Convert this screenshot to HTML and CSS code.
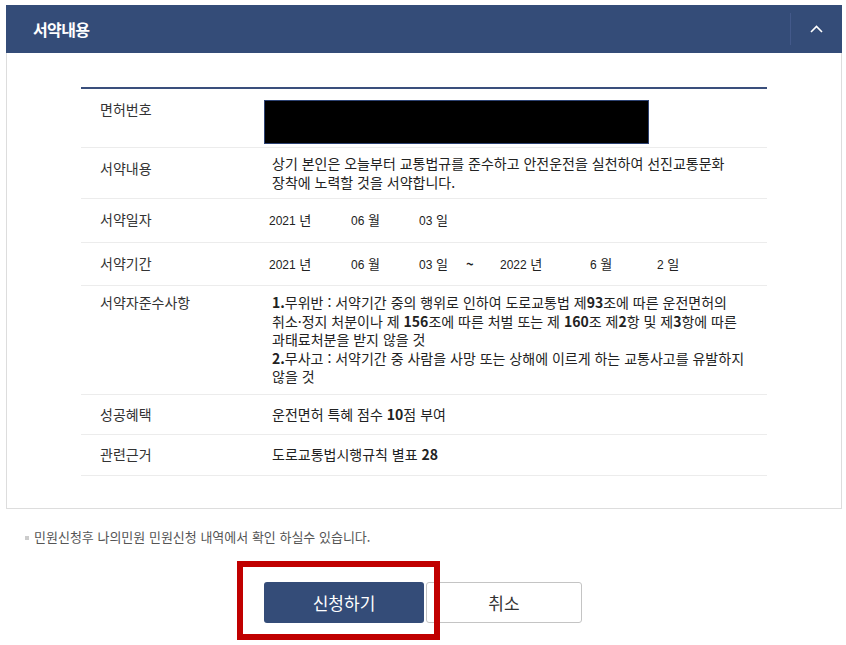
FILE: index.html
```html
<!DOCTYPE html>
<html lang="ko">
<head>
    <meta charset="UTF-8">
    <title>서약내용</title>
    <link rel="stylesheet" href="styles.css">
</head>
<body>

<!-- Pledge panel -->
<div class="panel">
    <div class="panel-head">
        <h2 class="panel-title">서약내용</h2>
        <div class="panel-toggle">
            <svg width="13" height="8" viewBox="0 0 13 8"><polyline points="1,7 6.5,1.5 12,7" fill="none" stroke="#fff" stroke-width="1.6"/></svg>
        </div>
    </div>
    <div class="panel-body">
        <table class="pledge">
            <tr class="row-license">
                <th>면허번호</th>
                <td><div class="masked"></div></td>
            </tr>
            <tr class="row-text">
                <th>서약내용</th>
                <td>상기 본인은 오늘부터 교통법규를 준수하고 안전운전을 실천하여 선진교통문화<br>장착에 노력할 것을 서약합니다.</td>
            </tr>
            <tr class="row-date">
                <th>서약일자</th>
                <td>
                    <span class="dp start-year"><em>2021</em> 년</span><span class="dp start-month"><em>06</em> 월</span><span class="dp start-day"><em>03</em> 일</span>
                </td>
            </tr>
            <tr class="row-date">
                <th>서약기간</th>
                <td>
                    <span class="dp start-year"><em>2021</em> 년</span><span class="dp start-month"><em>06</em> 월</span><span class="dp start-day"><em>03</em> 일</span><span class="dp tilde">~</span><span class="dp end-year"><em>2022</em> 년</span><span class="dp end-month"><em>6</em> 월</span><span class="dp"><em>2</em> 일</span>
                </td>
            </tr>
            <tr class="row-rules">
                <th>서약자준수사항</th>
                <td><b>1.</b>무위반 : 서약기간 중의 행위로 인하여 도로교통법 제<b>93</b>조에 따른 운전면허의<br>취소·정지 처분이나 제 <b>156</b>조에 따른 처벌 또는 제 <b>160</b>조 제<b>2</b>항 및 제<b>3</b>항에 따른<br>과태료처분을 받지 않을 것<br><b>2.</b>무사고 : 서약기간 중 사람을 사망 또는 상해에 이르게 하는 교통사고를 유발하지<br>않을 것</td>
            </tr>
            <tr>
                <th>성공혜택</th>
                <td>운전면허 특혜 점수 <b>10</b>점 부여</td>
            </tr>
            <tr>
                <th>관련근거</th>
                <td>도로교통법시행규칙 별표 <b>28</b></td>
            </tr>
        </table>
    </div>
</div>

<p class="note">민원신청후 나의민원 민원신청 내역에서 확인 하실수 있습니다.</p>

<div class="actions">
    <div class="btn-wrap">
        <button class="btn btn-primary">신청하기</button>
        <span class="highlight"></span>
    </div>
    <button class="btn btn-cancel">취소</button>
</div>

</body>
</html>
```

FILE: styles.css
```css
body {
    margin: 0;
    padding-bottom: 30px;
    font-family: "Noto Sans CJK KR", "Noto Sans", sans-serif;
    color: #333;
    background-color: #fff;
}

/* Panel */
.panel {
    margin: 5px 4px 0 6px;
}

.panel-head {
    height: 48px;
    background-color: #344c78;
    display: flex;
    justify-content: space-between;
    align-items: center;
}

.panel-title {
    margin: 0;
    padding-left: 27px;
    font-size: 16px;
    font-weight: bold;
    color: #fff;
    letter-spacing: -0.6px;
}

.panel-toggle {
    width: 51px;
    height: 32px;
    border-left: 1px solid #43598a;
    display: flex;
    justify-content: center;
    align-items: center;
}

.panel-body {
    border: 1px solid #ddd;
    border-top: none;
    padding: 34px 74px 32px;
}

/* Pledge table */
.pledge {
    width: 100%;
    border-collapse: collapse;
    border-top: 2px solid #3a4f7c;
    font-size: 14px;
    line-height: 18.5px;
}

.pledge tr {
    border-bottom: 1px solid #ececec;
}

.pledge th {
    width: 172px;
    padding: 10px 0 11px 19px;
    text-align: left;
    font-weight: normal;
    vertical-align: top;
    color: #333;
}

.pledge td {
    padding: 10px 0 11px;
    vertical-align: top;
    color: #222;
}

.pledge b {
    font-weight: bold;
}

.row-license th {
    padding-top: 11px;
}

.row-license td {
    padding: 11px 0 3px;
}

.masked {
    width: 383px;
    height: 42px;
    margin-left: -8px;
    background-color: #000;
    border: 1px solid #2d4272;
}

.row-text th {
    padding-top: 11px;
}

.row-text td {
    padding: 6px 0 7px;
}

.row-date th,
.row-date td {
    padding: 11px 0 11px;
}

.row-date th {
    padding-left: 19px;
}

.row-rules th,
.row-rules td {
    padding: 7px 0 8px;
}

.row-rules th {
    padding-left: 19px;
}

/* Date parts */
.dp {
    display: inline-block;
    font-size: 13px;
}

.dp em {
    font-style: normal;
    font-family: "Liberation Sans", Arial, sans-serif;
    font-size: 12px;
}

.start-year { width: 82px; margin-left: -3px; }
.start-month { width: 68px; }
.start-day { width: 47px; }
.tilde { width: 34px; font-weight: bold; }
.end-year { width: 90px; }
.end-month { width: 67px; }

/* Note under the panel */
.note {
    margin: 19px 0 0 25px;
    padding-left: 9px;
    position: relative;
    font-size: 13px;
    line-height: 18px;
    color: #555;
}

.note::before {
    content: "";
    position: absolute;
    left: 0;
    top: 8px;
    width: 4px;
    height: 4px;
    background-color: #ccc;
}

/* Buttons */
.actions {
    display: flex;
    justify-content: center;
    gap: 2px;
    margin-top: 36px;
}

.btn-wrap {
    position: relative;
}

.btn {
    height: 41px;
    border-radius: 3px;
    font-family: "Noto Sans CJK KR", sans-serif;
    font-size: 17px;
    cursor: pointer;
}

.btn-primary {
    width: 160px;
    border: none;
    background-color: #344c78;
    color: #fff;
}

.btn-cancel {
    width: 156px;
    border: 1px solid #c4c4c4;
    background-color: #fff;
    color: #333;
}

/* Red highlight around the submit button */
.highlight {
    position: absolute;
    left: -27px;
    top: -21px;
    width: 203px;
    height: 79px;
    border: 6px solid #c00000;
    box-sizing: border-box;
    pointer-events: none;
}
```
